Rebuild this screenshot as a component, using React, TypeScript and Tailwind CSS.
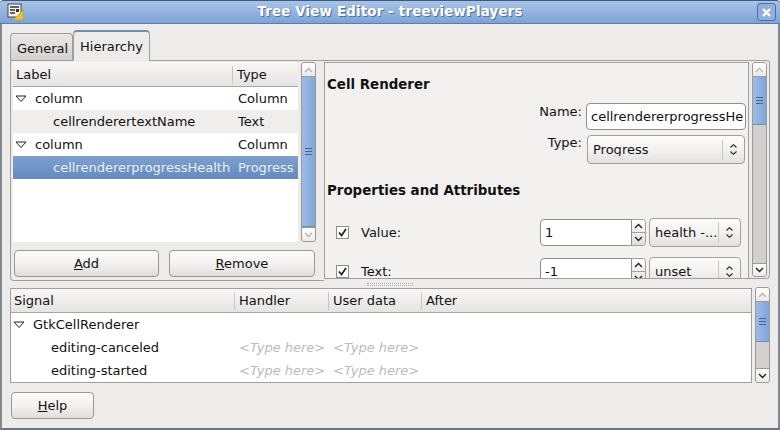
import React from 'react';

const FONT = "font-['DejaVu_Sans',sans-serif]";

const Chevron: React.FC<{ up?: boolean; color?: string }> = ({ up, color = '#222' }) => (
    <svg width="9" height="6" viewBox="0 0 9 6">
        <polyline points={up ? '1,5 4.5,1.5 8,5' : '1,1 4.5,4.5 8,1'} fill="none" stroke={color} strokeWidth="1.4" />
    </svg>
);

const Expander: React.FC = () => (
    <svg width="12" height="8" viewBox="0 0 12 8" className="shrink-0">
        <polygon points="1,1 11,1 6,6.5" fill="#fff" stroke="#222" strokeWidth="1" />
    </svg>
);

interface ScrollProps {
    thumb: number;
    track: number;
    upDisabled?: boolean;
    downDisabled?: boolean;
}

const Scrollbar: React.FC<ScrollProps> = ({ thumb, track, upDisabled = true, downDisabled }) => (
    <div className="w-[15px] flex flex-col shrink-0 border border-[#9a9996] rounded-[3px] overflow-hidden bg-[#d1d0ce]">
        <div className="h-[14px] shrink-0 flex items-center justify-center bg-gradient-to-b from-white to-[#eceae8] border-b border-[#9a9996]">
            <Chevron up color={upDisabled ? '#b5b5b5' : '#222'} />
        </div>
        <div className="shrink-0 flex flex-col items-center justify-center gap-[2px] bg-gradient-to-r from-[#9dbce6] to-[#7fa6da] border-b border-[#6f90bd]" style={{ height: thumb }}>
            <div className="w-[7px] h-px bg-[#48648c]" />
            <div className="w-[7px] h-px bg-[#48648c]" />
            <div className="w-[7px] h-px bg-[#48648c]" />
        </div>
        <div style={{ height: track }} className="shrink-0" />
        <div className="flex-1 flex items-center justify-center bg-gradient-to-b from-white to-[#eceae8] border-t border-[#9a9996]">
            <Chevron color={downDisabled ? '#b5b5b5' : '#222'} />
        </div>
    </div>
);

const GtkButton: React.FC<{ className: string; children: React.ReactNode }> = ({ className, children }) => (
    <button className={`h-[27px] border border-[#9a9996] rounded-[4px] bg-gradient-to-b from-[#fbfbfa] via-[#f3f2f1] to-[#dfdedc] text-[#111] text-center ${className}`}>
        {children}
    </button>
);

const HeaderCell: React.FC<{ className: string; label: string }> = ({ className, label }) => (
    <div className={`h-[18px] flex items-center border-r border-[#c8c7c5] ${className}`}>{label}</div>
);

const ComboArrows: React.FC = () => (
    <div className="flex flex-col items-center gap-[3px]">
        <svg width="7" height="4" viewBox="0 0 7 4"><polyline points="0.5,3.5 3.5,0.7 6.5,3.5" fill="none" stroke="#222" strokeWidth="1.1" /></svg>
        <svg width="7" height="4" viewBox="0 0 7 4"><polyline points="0.5,0.5 3.5,3.3 6.5,0.5" fill="none" stroke="#222" strokeWidth="1.1" /></svg>
    </div>
);

const Combo: React.FC<{ className: string; label: string; arrowWidth: string }> = ({ className, label, arrowWidth }) => (
    <div className={`flex items-center border border-[#a3a2a0] rounded-[4px] bg-gradient-to-b from-[#fcfcfb] via-[#f3f2f1] to-[#e2e1df] ${className}`}>
        <span className="flex-1 pl-[5px] whitespace-nowrap overflow-hidden">{label}</span>
        <div className={`flex justify-center border-l border-[#c6c5c3] h-[20px] items-center ${arrowWidth}`}>
            <ComboArrows />
        </div>
    </div>
);

const PropRow: React.FC<{ label: string; value: string; combo: string; className: string }> = ({ label, value, combo, className }) => (
    <div className={`flex items-center ${className}`}>
        <div className="ml-[11px] w-[13px] h-[13px] border border-[#8f8e8c] bg-white flex items-center justify-center shrink-0">
            <svg width="11" height="11" viewBox="0 0 11 11"><polyline points="2,5.5 4.5,8.5 9,2" fill="none" stroke="#222" strokeWidth="1.7" /></svg>
        </div>
        <span className="ml-[12px] w-[179px]">{label}</span>
        <div className="w-[92px] h-[27px] shrink-0 border border-[#8f8e8c] rounded-l-[4px] bg-white pl-[4px] flex items-center">{value}</div>
        <div className="w-[14px] h-[27px] shrink-0 flex flex-col border border-l-0 border-[#a3a2a0] rounded-r-[4px] overflow-hidden">
            <div className="flex-1 flex items-center justify-center bg-gradient-to-b from-white to-[#eeedeb] border-b border-[#a3a2a0]"><Chevron up /></div>
            <div className="flex-1 flex items-center justify-center bg-gradient-to-b from-[#f2f1ef] to-[#dddcda]"><Chevron /></div>
        </div>
        <Combo className="ml-[3px] w-[92px] h-[29px] shrink-0" label={combo} arrowWidth="w-[22px]" />
    </div>
);

const App: React.FC = () => {
    return (
        <div className={`w-[780px] h-[430px] flex flex-col overflow-hidden bg-[#edecea] text-[13px] leading-none text-[#111] ${FONT}`}>
            {/* title bar */}
            <div className="h-[24px] shrink-0 flex items-center relative bg-gradient-to-b from-[#a9c3e6] to-[#7fa3d6] border-t border-[#3d5a85] border-b border-b-[#5b7cab] rounded-t-[4px]">
                <svg width="18" height="18" viewBox="0 0 18 18" className="ml-[7px] shrink-0">
                    <rect x="1" y="1" width="13" height="13" fill="#f4f4f0" stroke="#444" />
                    <path d="M3 4h9M3 7h5M3 10h5" stroke="#333" strokeWidth="1.3" />
                    <rect x="9" y="6" width="3" height="3" fill="#333" />
                    <polygon points="16.5,6.5 16.5,17 6,17" fill="#e2c23c" stroke="#b89a20" strokeWidth="0.6" />
                </svg>
                <div className="flex-1 text-center text-[13.33px] font-bold text-white tracking-[0.2px] [text-shadow:1px_1px_0_#4f6f9f] pr-[2px]">Tree View Editor - treeviewPlayers</div>
                <div className="w-[19px] h-[18px] mr-[4px] shrink-0 rounded-[3px] border border-[#4f6f9f] bg-[#8fb0dd] flex items-center justify-center">
                    <svg width="11" height="11" viewBox="0 0 11 11"><path d="M2 2l7 7M9 2l-7 7" stroke="#fff" strokeWidth="2.4" /></svg>
                </div>
            </div>

            <div className="flex-1 flex flex-col border-x-2 border-[#7f8791] border-b-2 border-b-[#6e747c] pl-[8px] pr-[8px] min-h-0">
                {/* tabs */}
                <div className="h-[36px] shrink-0 flex items-end pl-0">
                    <div className="w-[63px] h-[27px] flex items-center justify-center pl-[2px] pt-[2px] border border-b-0 border-[#a09f9d] rounded-t-[4px] bg-gradient-to-b from-[#e9e8e6] to-[#d3d2d0]">General</div>
                    <div className="w-[77px] h-[31px] -mb-px relative flex items-start pt-[8px] justify-center border-x border-[#a09f9d] border-t-2 border-t-[#6d8fbd] rounded-t-[4px] bg-[#edecea]">Hierarchy</div>
                </div>

                {/* notebook page */}
                <div className="h-[220px] shrink-0 flex items-start border-t border-[#a09f9d] rounded-tr-[4px]">
                    <div className="w-[314px] h-[220px] shrink-0 flex flex-col border-l border-b border-[#a09f9d] rounded-bl-[4px] pl-[2px] pt-[1px]">
                        <div className="h-[180px] flex">
                            <div className="w-[285px] flex flex-col bg-white">
                                <div className="h-[25px] flex items-center shrink-0 pt-px bg-gradient-to-b from-[#f8f7f6] to-[#e5e4e2] border-b border-[#a8a7a5]">
                                    <HeaderCell className="w-[220px] pl-[3px]" label="Label" />
                                    <span className="pl-[4px]">Type</span>
                                </div>
                                <div className="h-[23px] flex items-center"><span className="w-[2px]" /><Expander /><span className="ml-[8px] w-[203px]">column</span><span>Column</span></div>
                                <div className="h-[23px] flex items-center bg-[#efeeec]"><span className="ml-[40px] w-[185px]">cellrenderertextName</span><span>Text</span></div>
                                <div className="h-[23px] flex items-center"><span className="w-[2px]" /><Expander /><span className="ml-[8px] w-[203px]">column</span><span>Column</span></div>
                                <div className="h-[23px] flex items-center bg-gradient-to-b from-[#7ea0cd] to-[#648abf] text-[#e9eff7]"><span className="ml-[40px] w-[185px]">cellrendererprogressHealth</span><span>Progress</span></div>
                            </div>
                            <div className="ml-[3px] flex">
                                <Scrollbar thumb={150} track={0} downDisabled />
                            </div>
                        </div>
                        <div className="flex mt-[8px] pl-px">
                            <GtkButton className="w-[145px]"><span className="underline">A</span>dd</GtkButton>
                            <GtkButton className="ml-[10px] w-[146px]"><span className="underline">R</span>emove</GtkButton>
                        </div>
                    </div>

                    {/* properties frame */}
                    <div className="h-[218px] flex-1 flex border-b border-r border-[#a09f9d] rounded-br-[4px] pt-px">
                        <div className="w-[425px] h-full overflow-hidden border-l border-t border-r border-[#a09f9d] bg-[#f2f1ef]">
                            <div className="pl-[2px] pt-[15px] text-[13.4px] font-bold">Cell Renderer</div>
                            <div className="flex justify-end mt-[12px] pr-[2px]">
                                <span className="mt-[2px] mr-[4px]">Name:</span>
                                <div className="w-[160px] h-[27px] border border-[#8f8e8c] rounded-[4px] bg-white flex items-center pl-[4px] overflow-hidden whitespace-nowrap">cellrendererprogressHe</div>
                            </div>
                            <div className="flex justify-end mt-[5px] pr-[3px]">
                                <span className="mt-[1px] mr-[5px]">Type:</span>
                                <Combo className="w-[158px] h-[29px]" label="Progress" arrowWidth="w-[22px]" />
                            </div>
                            <div className="pl-[2px] mt-[20px] text-[13.4px] font-bold">Properties and Attributes</div>
                            <PropRow className="mt-[20px]" label="Value:" value="1" combo="health -..." />
                            <PropRow className="mt-[10px]" label="Text:" value="-1" combo="unset" />
                        </div>
                        <div className="ml-[3px] flex mb-px">
                            <Scrollbar thumb={48} track={138} upDisabled />
                        </div>
                    </div>
                </div>

                {/* paned handle */}
                <div className="h-[8px] shrink-0 flex items-center">
                    <div className="w-[46px] h-[3px] border-y border-dotted border-[#b5b4b2] ml-[357px]" />
                </div>

                {/* signals */}
                <div className="h-[95px] shrink-0 flex">
                    <div className="w-[742px] flex flex-col border border-[#a09f9d] bg-white">
                        <div className="h-[24px] flex items-center shrink-0 bg-gradient-to-b from-[#f8f7f6] to-[#e5e4e2] border-b border-[#a8a7a5]">
                            <HeaderCell className="w-[224px] pl-[3px]" label="Signal" />
                            <HeaderCell className="w-[94px] pl-[4px]" label="Handler" />
                            <HeaderCell className="w-[93px] pl-[4px]" label="User data" />
                            <span className="pl-[4px]">After</span>
                        </div>
                        <div className="h-[23px] flex items-center shrink-0"><span className="w-[2px]" /><Expander /><span className="ml-[8px]">GtkCellRenderer</span></div>
                        <div className="h-[23px] flex items-center shrink-0"><span className="ml-[40px] w-[188px]">editing-canceled</span><span className="w-[94px] italic text-[#bdbcba]">&lt;Type here&gt;</span><span className="italic text-[#bdbcba]">&lt;Type here&gt;</span></div>
                        <div className="h-[23px] flex items-center shrink-0"><span className="ml-[40px] w-[188px]">editing-started</span><span className="w-[94px] italic text-[#bdbcba]">&lt;Type here&gt;</span><span className="italic text-[#bdbcba]">&lt;Type here&gt;</span></div>
                    </div>
                    <div className="ml-[3px] -mt-px flex">
                        <Scrollbar thumb={40} track={26} upDisabled />
                    </div>
                </div>

                {/* footer */}
                <div className="mt-[9px] ml-px">
                    <GtkButton className="w-[83px]"><span className="underline">H</span>elp</GtkButton>
                </div>
            </div>
        </div>
    );
};

export default App;
